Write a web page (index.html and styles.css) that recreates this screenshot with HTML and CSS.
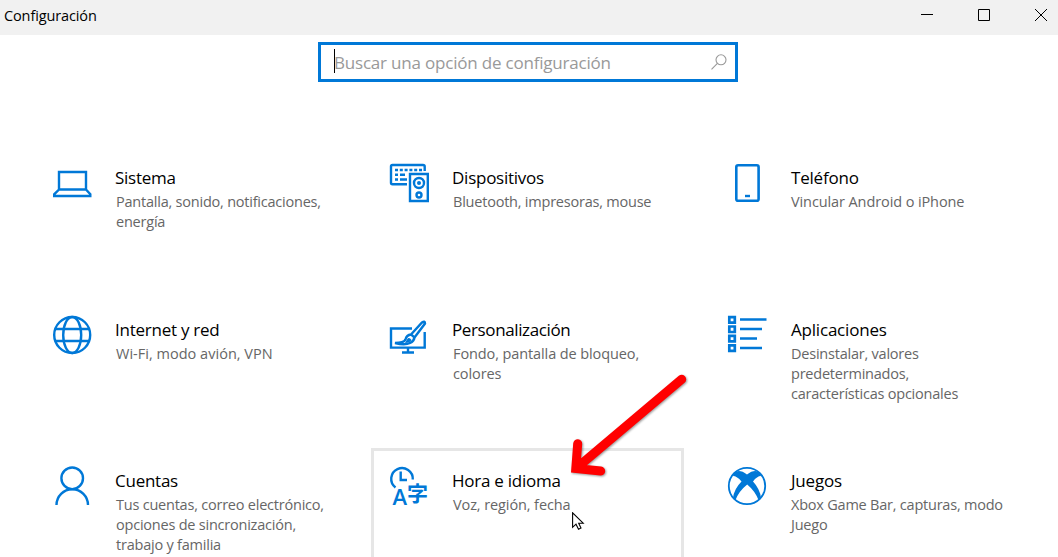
FILE: index.html
```html
<!DOCTYPE html>
<html lang="es">
<head>
<meta charset="utf-8">
<title>Configuración</title>
<link rel="stylesheet" href="styles.css">
</head>
<body>
<header class="titlebar">
  <span class="caption">Configuración</span>
  <div class="controls">
    <svg width="12" height="12" viewBox="0 0 12 12"><path d="M0 5.5H12"/></svg>
    <svg width="12" height="12" viewBox="0 0 12 12"><path d="M.5.5h11v11H.5z"/></svg>
    <svg width="12" height="12" viewBox="0 0 12 12"><path d="M0 0 12 12M12 0 0 12"/></svg>
  </div>
</header>
<main>
  <div class="search">
    <span class="caret"></span>
    <span class="placeholder">Buscar una opción de configuración</span>
    <svg class="lens" width="16" height="16" viewBox="0 0 16 16"><circle cx="10" cy="5.8" r="5"/><path d="M6.4 9.4.5 15.3"/></svg>
  </div>
  <div class="grid">
    <section class="tile">
      <svg class="icon" viewBox="0 0 40 40"><path d="M7 9H34V26.500H7zM7 26.500 2.200 31.300V33H38.300V31.300L34 26.500"/></svg>
      <div><h2>Sistema</h2><p>Pantalla, sonido, notificaciones,<br>energía</p></div>
    </section>
    <section class="tile">
      <svg class="icon" viewBox="0 0 40 40"><path d="M18 21.200H3.500Q2 21.200 2 19.700V3.500Q2 2 3.500 2H34Q35.700 2 35.700 3.500V8M21 11H38.800V38H21z"/><path stroke-dasharray="3 1.800" d="M6 7H33"/><path d="M6 11.800H9M11 11.800H16M6 16.500H9M11 16.500H18"/><circle cx="30" cy="20" r="5"/><circle cx="30" cy="32" r="2.500"/><circle class="solid" cx="30" cy="20" r="2"/></svg>
      <div><h2>Dispositivos</h2><p>Bluetooth, impresoras, mouse</p></div>
    </section>
    <section class="tile third">
      <svg class="icon" viewBox="0 0 40 40"><rect x="9.300" y="2.200" width="22.300" height="35.600" rx="1.800" stroke-width="2.600"/><path d="M18 33H23"/></svg>
      <div><h2>Teléfono</h2><p class="wide">Vincular Android o iPhone</p></div>
    </section>
    <section class="tile">
      <svg class="icon" viewBox="0 0 40 40"><circle cx="20.200" cy="20" r="18"/><ellipse cx="20.200" cy="20" rx="9" ry="18"/><path d="M3.500 14H37M3.500 26H37"/></svg>
      <div><h2>Internet y red</h2><p class="wider">Wi-Fi, modo avión, VPN</p></div>
    </section>
    <section class="tile">
      <svg class="icon" viewBox="0 0 40 40"><path d="M23 13.500H2V32.600H35.700V17M19 33V38M13 37.500H25"/><path d="M22 19.500 33 7.500Q36 5.500 36 8.500L25.500 22.500zM22 19.500Q17.500 20 16.500 24.500 15 28 6 28 16 30.500 21 28 25 26 25.500 22.500"/><path class="solid" d="M18 24.500Q20 21.500 22.500 25 21 28 16 28z"/></svg>
      <div><h2 class="narrow">Personalización</h2><p class="wide">Fondo, pantalla de bloqueo,<br>colores</p></div>
    </section>
    <section class="tile third">
      <svg class="icon" viewBox="0 0 40 40"><path stroke-width="2.700" d="M2.300 2.200H7.800V7.700H2.300zM2.300 11.500H7.800V17H2.300zM2.300 20.800H7.800V26.300H2.300zM2.300 30.300H7.800V35.800H2.300z"/><path d="M13 4.500H39.500M13 14H35M13 23.500H30M13 33H35"/></svg>
      <div><h2>Aplicaciones</h2><p>Desinstalar, valores<br>predeterminados,<br>características opcionales</p></div>
    </section>
    <section class="tile">
      <svg class="icon" viewBox="0 0 40 40"><circle cx="20.200" cy="12.300" r="10.800"/><path d="M4.500 39A15.700 15.700 0 0 1 36 39"/></svg>
      <div><h2>Cuentas</h2><p>Tus cuentas, correo electrónico,<br>opciones de sincronización,<br>trabajo y familia</p></div>
    </section>
    <section class="tile hover">
      <svg class="icon" viewBox="0 0 40 40"><path d="M6.500 21.500A10.800 10.800 0 1 1 23.800 13.500M11.700 5.500V14H18"/><text class="latin" x="3.500" y="39">A</text><text class="kanji" x="18" y="34.500">字</text></svg>
      <div><h2>Hora e idioma</h2><p class="wide">Voz, región, fecha</p></div>
    </section>
    <section class="tile third">
      <svg class="icon" viewBox="0 0 40 40"><circle cx="20" cy="20" r="18.200" stroke-width="1.800"/><path class="solid" d="M7 7Q12 2.500 20 8.500 28 2.500 33 7L34 10Q30 10 26 15.500 33 23 34 32L31.500 34Q28 25 20.200 18.500 12 25 8.500 34L6 32Q7 23 14.500 15.500 10 10 6 10z"/></svg>
      <div><h2>Juegos</h2><p>Xbox Game Bar, capturas, modo<br>Juego</p></div>
    </section>
  </div>
</main>
<svg class="arrow" width="130" height="110" viewBox="0 0 130 110"><path d="M121.700 9.300 16 98.500M17.700 73.700 15.800 98.500 40.700 101"/></svg>
<svg class="pointer" width="13" height="19" viewBox="0 0 13 19"><path d="M.6.800V15.300L4 12.200 6.500 17.300 9 16 6.700 11.200H11.200z"/></svg>
</body>
</html>
```
FILE: styles.css
```css
* { box-sizing: border-box; }
body {
  margin: 0;
  width: 1058px;
  height: 557px;
  overflow: hidden;
  position: relative;
  background: #fff;
  color: #000;
  font-family: "Noto Sans", "Open Sans", sans-serif;
}
.titlebar {
  height: 35px;
  background: #f1f1f1;
  display: flex;
  justify-content: space-between;
  padding: 0 11px 0 4px;
}
.caption { font-family: "Open Sans", sans-serif; font-size: 14.5px; line-height: 31px; letter-spacing: -0.12px; }
.controls { display: flex; gap: 45px; padding-top: 9px; }
.controls svg { fill: none; stroke: #000; stroke-width: 1; }
.search {
  width: 420px;
  height: 40px;
  margin: 7px 0 0 318px;
  border: 3px solid #0078d7;
  display: flex;
  align-items: center;
  padding: 0 8px 0 13px;
}
.caret { width: 1px; height: 24px; background: #000; margin: -3px -1px 0 0; }
.placeholder { font-family: "Open Sans", sans-serif; color: #999; font-size: 17px; letter-spacing: -0.2px; flex: 1; white-space: nowrap; }
.lens { fill: none; stroke: #999; stroke-width: 1.1; }
.grid {
  display: grid;
  grid-template-columns: 337px 338px 313px;
  grid-template-rows: 152px 151px 109px;
  padding: 63px 0 0 34px;
}
.tile {
  width: 313px;
  border: 3px solid transparent;
  display: flex;
  gap: 23px;
  padding: 15px 0 0 15px;
  white-space: nowrap;
  font-family: "Open Sans", sans-serif;
}
.hover { border-color: #e6e6e6; border-bottom: 0; }
.icon {
  width: 40px;
  height: 40px;
  flex: none;
  fill: none;
  stroke: #0078d7;
  stroke-width: 2.4;
  overflow: visible;
}
.solid { fill: #0078d7; stroke: none; }
.latin, .kanji { fill: #0078d7; stroke: none; }
.latin { font: 600 22px "Open Sans", sans-serif; }
.kanji { font: bold 21px "Noto Sans CJK JP", sans-serif; }
h2 { margin: 3px 0 0; font-size: 17px; line-height: 24px; font-weight: 400; letter-spacing: -0.25px; }
p { margin: 2px 0 0 1px; font-size: 14.5px; line-height: 20px; color: #666; letter-spacing: -0.22px; }
.narrow { letter-spacing: -0.38px; }
.wide { letter-spacing: -0.1px; }
.wider { letter-spacing: 0.02px; }
.third h2 { margin-left: 1px; letter-spacing: -0.2px; }
.arrow {
  position: absolute;
  left: 560px;
  top: 370px;
  fill: none;
  stroke: #f00;
  stroke-width: 9;
  stroke-linecap: round;
  filter: drop-shadow(1px 1px 1px rgba(0, 0, 0, .4));
}
.pointer { position: absolute; left: 572px; top: 512px; fill: #fff; stroke: #000; stroke-width: 1.1; }
```
